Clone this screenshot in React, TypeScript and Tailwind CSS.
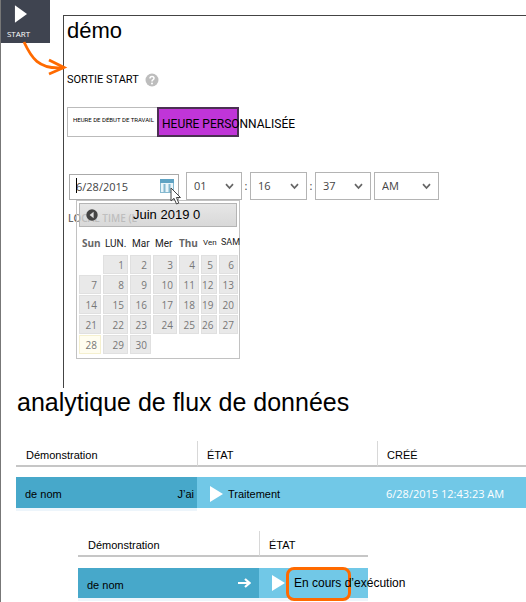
import React from "react";

const ARIAL = "font-['Liberation_Sans',Arial,sans-serif]";
const ROBOTO = "font-['Roboto','Liberation_Sans',sans-serif]";
const OPEN = "font-['Open_Sans','Noto_Sans',sans-serif]";

const weekdays = [
  { label: "Sun", style: "font-['Open_Sans',sans-serif] text-[10px] font-bold text-[#666] pl-[3px]" },
  { label: "LUN.", style: "font-['Roboto',sans-serif] text-[10px] font-normal text-[#222] pl-[2px]" },
  { label: "Mar", style: "font-['Roboto',sans-serif] text-[10px] font-normal text-[#222] pl-[2px]" },
  { label: "Mer", style: "font-['Roboto',sans-serif] text-[10px] font-normal text-[#222] pl-[2px]" },
  { label: "Thu", style: "font-['Open_Sans',sans-serif] text-[10px] font-bold text-[#666] pl-0" },
  { label: "Ven", style: "font-['Roboto',sans-serif] text-[8px] font-normal text-[#222] pl-[2px]" },
  { label: "SAM", style: "font-['Roboto',sans-serif] text-[9px] font-normal text-[#222] pl-[2px]" },
];

const weeks: (number | null)[][] = [
  [null, 1, 2, 3, 4, 5, 6],
  [7, 8, 9, 10, 11, 12, 13],
  [14, 15, 16, 17, 18, 19, 20],
  [21, 22, 23, 24, 25, 26, 27],
  [28, 29, 30, null, null, null, null],
];

function Chevron() {
  return (
    <svg className="pointer-events-none absolute right-2 top-[11px]" width="9" height="7" viewBox="0 0 9 7" fill="none" stroke="#666" strokeWidth="1.7">
      <path d="M1 1.2 4.5 5 8 1.2" />
    </svg>
  );
}

function Picker({ label, value, width }: { label: string; value: string; width: string }) {
  return (
    <div className={`relative ${width}`}>
      <select
        aria-label={label}
        defaultValue={value}
        className={`${OPEN} h-7 w-full appearance-none border border-[#b4b4b4] bg-white pl-[7px] text-[11px] text-[#444]`}
      >
        <option>{value}</option>
      </select>
      <Chevron />
    </div>
  );
}

function Play() {
  return (
    <svg className="shrink-0" width="14" height="16" viewBox="0 0 14 16" fill="#fff">
      <path d="M1 0 14 8 1 16Z" />
    </svg>
  );
}

function Calendar() {
  return (
    <div className="absolute left-[7px] top-full w-[164px] border border-[#c2c2c2] bg-white/30 px-[2px] pb-[3px] pt-[2px]">
      <div className="flex h-6 items-center border border-[#b5b5b5] bg-linear-to-b from-[#dcdcdc]/70 to-[#c8c8c8]/70">
        <button aria-label="Mois précédent" className="ml-[6px]">
          <svg width="12" height="12" viewBox="0 0 12 12">
            <circle cx="6" cy="6" r="5.7" fill="#444" />
            <path d="M7.6 2.8 3.6 6l4 3.2Z" fill="#ddd" />
          </svg>
        </button>
        <span className={`${ARIAL} ml-[35px] text-[13px] text-black`}>Juin 2019 0</span>
      </div>
      <table className="-ml-[2px] mt-1 w-[158px] table-fixed border-separate border-spacing-x-[2px] border-spacing-y-[1px]">
        <colgroup>
          <col className="w-[22px]" />
          <col className="w-[25px]" />
          <col className="w-[21px]" />
          <col className="w-[24px]" />
          <col className="w-[20px]" />
          <col className="w-[16px]" />
          <col className="w-[19px]" />
        </colgroup>
        <thead>
          <tr>
            {weekdays.map((d) => (
              <th key={d.label} className={`h-[22px] whitespace-nowrap text-left align-middle ${d.style}`}>
                {d.label}
              </th>
            ))}
          </tr>
        </thead>
        <tbody>
          {weeks.map((week, i) => (
            <tr key={i}>
              {week.map((day, j) => (
                <td
                  key={j}
                  className={`h-[19px] p-0 pr-[3px] text-right ${OPEN} text-[10px] leading-none text-[#777] ${
                    day === null ? "" : day === 28 ? "border border-[#f5f0cf] bg-[#fffdf0]" : "border border-[#e0e0e0] bg-[#e9e9e9]"
                  }`}
                >
                  {day}
                </td>
              ))}
            </tr>
          ))}
        </tbody>
      </table>
    </div>
  );
}

function HeadCell({ children, first }: { children?: React.ReactNode; first?: boolean }) {
  return (
    <th
      className={`h-[26px] border-b-2 border-b-[#c6c6c6] p-0 pt-[3px] text-left font-normal ${
        first ? "w-[181px] pl-[10px]" : "border-l border-l-[#d8d8d8] pl-[9px]"
      }`}
    >
      {children}
    </th>
  );
}

export default function App() {
  return (
    <main className={`${ARIAL} relative min-h-screen overflow-hidden border-l border-[#777] bg-white text-black`}>
      <div className="flex items-start">
        <button className={`${OPEN} -ml-px flex h-[43px] w-[50px] shrink-0 flex-col items-center bg-[#3f4450] pr-[13px] pt-[5px] text-[8px] leading-4 text-white`}>
          <svg className="ml-1 mb-[3px] h-[18px] w-[13px] shrink-0" viewBox="0 0 14 19" fill="#fff">
            <path d="M1 0 14 9.500 1 19Z" />
          </svg>
          START
        </button>

        <section className="ml-[13px] mt-[15px] min-w-0 flex-1 border-l border-t border-[#444] pb-[162px] pl-[3px]">
          <h1 className="pt-px text-[22px] leading-7">démo</h1>
          <h2 className={`${ROBOTO} mt-[27px] flex items-center text-[11px] leading-4`}>
            SORTIE START
            <svg className="ml-[6px]" width="14" height="14" viewBox="0 0 14 14">
              <circle cx="7" cy="7" r="6.500" fill="#bdbdbd" />
              <path d="M5 5.500Q5 3.500 7 3.500T9 5.300Q9 6.400 7.900 6.900 7 7.300 7 8.500" fill="none" stroke="#fff" strokeWidth="1.500" />
              <circle cx="7" cy="10.400" r="1" fill="#fff" />
            </svg>
          </h2>

          <div className={`${ROBOTO} mt-[19px] flex h-[30px] text-left`}>
            <button className="w-[90px] whitespace-nowrap border border-r-0 border-[#bbb] pb-[5px] pl-[5px] text-left text-[6px]">
              HEURE DE DÉBUT DE TRAVAIL
            </button>
            <button className="w-[82px] whitespace-nowrap border-2 border-[#4b3053] bg-[#c035d8] pl-[3px] pt-[3px] text-left text-[12px]">
              HEURE PERSONNALISÉE
            </button>
          </div>

          <div className={`${OPEN} mt-[35px] flex items-end pl-[2px] text-[11px] text-[#444]`}>
            <div className="relative w-[110px]">
              <input
                aria-label="Date"
                defaultValue="6/28/2015"
                className="block h-[26px] w-full border border-[#aaa] bg-white pb-[2px] pl-[6px] text-[11px] text-[#444]"
              />
              <span className="absolute left-[7px] top-1 h-[15px] w-px bg-black" />
              <svg className="absolute right-[5px] top-[5px]" width="14" height="14" viewBox="0 0 14 14">
                <rect x=".5" y=".5" width="13" height="13" fill="#e9f5fa" stroke="#86b9d0" />
                <path d="M0 0H14V4H0Z" fill="#5fa3c4" />
                <path d="M4.500 5V13M9.500 5V13" stroke="#86b9d0" strokeWidth="2" />
              </svg>
              <svg className="absolute left-[101px] top-[13px] z-20" width="12" height="18" viewBox="0 0 12 18">
                <path d="M1 1V14L4 11.300 6.500 17 8.800 16 6.400 10.500H10.500Z" fill="#fff" stroke="#444" />
              </svg>
              <div className="relative z-10">
                <Calendar />
              </div>
            </div>
            <div className="ml-[7px] flex items-center">
              <Picker label="Heure" value="01" width="w-14" />
              <span className="w-[8px] text-center">:</span>
              <Picker label="Minute" value="16" width="w-[57px]" />
              <span className="w-[8px] text-center">:</span>
              <Picker label="Seconde" value="37" width="w-14" />
              <div className="ml-[3px]">
                <Picker label="Période" value="AM" width="w-[65px]" />
              </div>
            </div>
          </div>
          <p className={`${OPEN} mt-[10px] pl-px text-[10px] font-semibold leading-4 text-[#666]`}>LOCAL TIME (L</p>
        </section>
      </div>

      <svg className="pointer-events-none absolute left-[20px] top-[38px]" width="50" height="40" viewBox="0 0 50 40" fill="none" stroke="#ff6a00" strokeWidth="2.800">
        <path d="M3 4C10 19 17 32 43 29.500" />
        <path d="M28 22 43 29.500 28 36" />
      </svg>

      <h2 className="pl-4 text-[25px] leading-7">analytique de flux de données</h2>

      <div className="mt-[25px] pl-[15px]">
        <table className="w-full table-fixed border-separate border-spacing-0 text-[11px] leading-4">
          <thead>
            <tr>
              <HeadCell first>Démonstration</HeadCell>
              <th className="h-[26px] w-[180px] border-b-2 border-l border-b-[#c6c6c6] border-l-[#d8d8d8] p-0 pl-[9px] pt-[3px] text-left font-normal">ÉTAT</th>
              <HeadCell>CRÉÉ</HeadCell>
            </tr>
          </thead>
          <tbody className="before:block before:h-[10px]">
            <tr>
              <td className="h-[31px] bg-[#47a8ca] p-0 pl-[9px] pr-[3px] pt-[3px]">
                <div className="flex justify-between">
                  <span>de nom</span>
                  <span>J’ai</span>
                </div>
              </td>
              <td className="bg-[#71c8e7] p-0 pl-3 pt-[2px]">
                <div className="flex items-center gap-[5px]">
                  <Play />
                  Traitement
                </div>
              </td>
              <td className={`${OPEN} bg-[#71c8e7] p-0 pl-[9px] pt-[2px] text-white`}>6/28/2015 12:43:23 AM</td>
            </tr>
          </tbody>
        </table>
        <div className="h-[3px] w-[181px] bg-[#edf5fb]" />
      </div>

      <div className="mt-5 pl-[77px]">
        <table className="w-[290px] table-fixed border-separate border-spacing-0 text-[11px] leading-4">
          <thead>
            <tr>
              <HeadCell first>Démonstration</HeadCell>
              <HeadCell>ÉTAT</HeadCell>
            </tr>
          </thead>
          <tbody className="before:block before:h-[11px]">
            <tr>
              <td className="h-[30px] bg-[#47a8ca] p-0 pl-[9px] pr-2 pt-[3px]">
                <div className="flex items-center justify-between">
                  <span>de nom</span>
                  <svg className="mb-1" width="13" height="10" viewBox="0 0 13 10" fill="none" stroke="#fff" strokeWidth="2.200">
                    <path d="M0 5H11M7 1 11.500 5 7 9" />
                  </svg>
                </div>
              </td>
              <td className="relative bg-[#71c8e7] p-0 pl-3">
                <div className="flex items-center">
                  <Play />
                  <span className="relative z-10 ml-[9px] whitespace-nowrap text-[12px]">En cours d’exécution</span>
                </div>
                <span className="absolute -top-px left-[27px] h-[34px] w-[65px] rounded-lg border-[3px] border-[#ff6a00]" />
              </td>
            </tr>
          </tbody>
        </table>
        <div className="h-[3px] w-[290px] bg-[#edf5fb]" />
      </div>
    </main>
  );
}
